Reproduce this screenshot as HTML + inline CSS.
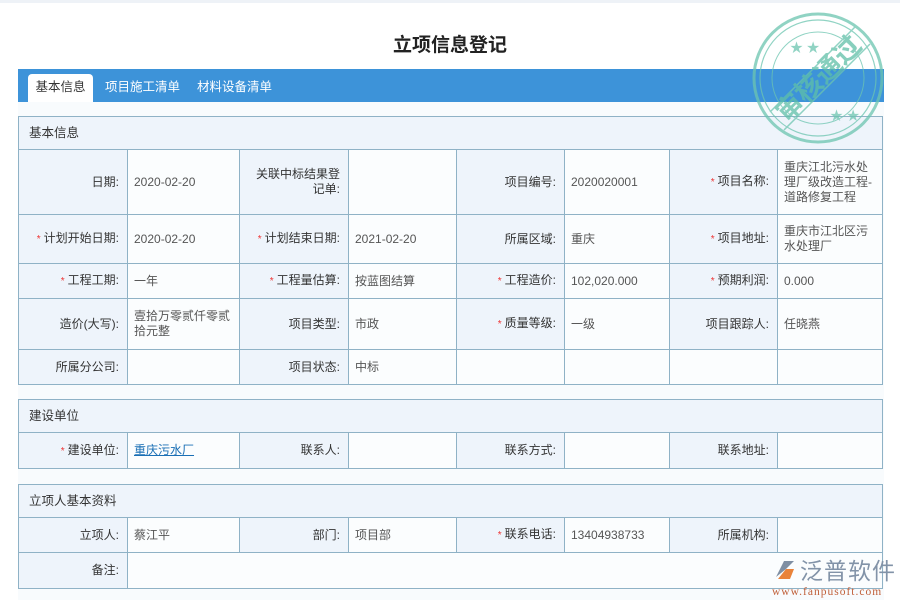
<!DOCTYPE html>
<html><head><meta charset="utf-8">
<style>
*{margin:0;padding:0;box-sizing:border-box}
body{width:900px;height:600px;background:#fff;font-family:"Liberation Sans","Noto Sans CJK SC",sans-serif;font-size:12px;color:#333;position:relative;overflow:hidden}
.topline{position:absolute;left:0;top:0;width:900px;height:3px;background:#eef2f7}
h1{position:absolute;top:30px;left:0;width:900px;text-align:center;font-size:19px;font-weight:bold;color:#222}
.tabs{position:absolute;left:18px;top:69px;width:866px;height:33px;background:#3d93d9}
.tab{position:absolute;top:5px;height:28px;line-height:26px;font-size:12.5px;color:#fff}
.tab.on{background:#fff;color:#333;border-radius:4px 4px 0 0;left:10px;width:65px;text-align:center}
.content{position:absolute;left:18px;top:102px;width:866px;height:498px;background:#f8fbfd}
table{position:absolute;left:18px;border-collapse:collapse;table-layout:fixed;width:864px}
td{border:1px solid #8fb2c6;padding:0 6px;font-size:12px;vertical-align:middle;line-height:15px}
td.h{background:#eef4fb;text-align:left;padding-left:10px;font-size:12.5px}
td.l{background:#eef4fb;text-align:right;padding-right:8px}
td.v{background:#fbfdfe;color:#555}
.s{color:#e33;font-size:10px;margin-right:3px}
a{color:#1a6fb5;text-decoration:underline}
.stamp{position:absolute;left:748px;top:8px;width:140px;height:140px;opacity:.75}
.logo{position:absolute;left:772px;top:555px}
</style></head><body>
<div class="topline"></div>
<h1>立项信息登记</h1>
<div class="content"></div>
<div class="tabs">
<div class="tab on">基本信息</div>
<div class="tab" style="left:87px">项目施工清单</div>
<div class="tab" style="left:179px">材料设备清单</div>
</div>
<table style="top:116px">
<col style="width:109px"><col style="width:112px"><col style="width:109px"><col style="width:108px"><col style="width:108px"><col style="width:105px"><col style="width:108px"><col style="width:105px">
<tr style="height:33px"><td class="h" colspan="8">基本信息</td></tr>
<tr style="height:65px"><td class="l">日期:</td><td class="v">2020-02-20</td><td class="l">关联中标结果登记单:</td><td class="v"></td><td class="l">项目编号:</td><td class="v">2020020001</td><td class="l"><span class="s">*</span>项目名称:</td><td class="v">重庆江北污水处理厂级改造工程-道路修复工程</td></tr>
<tr style="height:49px"><td class="l"><span class="s">*</span>计划开始日期:</td><td class="v">2020-02-20</td><td class="l"><span class="s">*</span>计划结束日期:</td><td class="v">2021-02-20</td><td class="l">所属区域:</td><td class="v">重庆</td><td class="l"><span class="s">*</span>项目地址:</td><td class="v">重庆市江北区污水处理厂</td></tr>
<tr style="height:35px"><td class="l"><span class="s">*</span>工程工期:</td><td class="v">一年</td><td class="l"><span class="s">*</span>工程量估算:</td><td class="v">按蓝图结算</td><td class="l"><span class="s">*</span>工程造价:</td><td class="v">102,020.000</td><td class="l"><span class="s">*</span>预期利润:</td><td class="v">0.000</td></tr>
<tr style="height:51px"><td class="l">造价(大写):</td><td class="v">壹拾万零贰仟零贰拾元整</td><td class="l">项目类型:</td><td class="v">市政</td><td class="l"><span class="s">*</span>质量等级:</td><td class="v">一级</td><td class="l">项目跟踪人:</td><td class="v">任晓燕</td></tr>
<tr style="height:35px"><td class="l">所属分公司:</td><td class="v"></td><td class="l">项目状态:</td><td class="v">中标</td><td class="v"></td><td class="v"></td><td class="v"></td><td class="v"></td></tr>
</table>
<table style="top:399px">
<col style="width:109px"><col style="width:112px"><col style="width:109px"><col style="width:108px"><col style="width:108px"><col style="width:105px"><col style="width:108px"><col style="width:105px">
<tr style="height:33px"><td class="h" colspan="8">建设单位</td></tr>
<tr style="height:36px"><td class="l"><span class="s">*</span>建设单位:</td><td class="v"><a>重庆污水厂</a></td><td class="l">联系人:</td><td class="v"></td><td class="l">联系方式:</td><td class="v"></td><td class="l">联系地址:</td><td class="v"></td></tr>
</table>
<table style="top:484px">
<col style="width:109px"><col style="width:112px"><col style="width:109px"><col style="width:108px"><col style="width:108px"><col style="width:105px"><col style="width:108px"><col style="width:105px">
<tr style="height:33px"><td class="h" colspan="8">立项人基本资料</td></tr>
<tr style="height:35px"><td class="l">立项人:</td><td class="v">蔡江平</td><td class="l">部门:</td><td class="v">项目部</td><td class="l"><span class="s">*</span>联系电话:</td><td class="v">13404938733</td><td class="l">所属机构:</td><td class="v"></td></tr>
<tr style="height:36px"><td class="l">备注:</td><td class="v" colspan="7"></td></tr>
</table>
<svg class="stamp" viewBox="0 0 140 140">
<g fill="none" stroke="#6cc5b0">
<circle cx="70" cy="70" r="64" stroke-width="3"/>
<circle cx="70" cy="70" r="58" stroke-width="1.2"/>
<circle cx="70" cy="70" r="46" stroke-width="1"/>
<line x1="22" y1="104" x2="108" y2="18" stroke-width="1.5"/>
<line x1="36" y1="122" x2="122" y2="36" stroke-width="1.5"/>
</g>
<text x="70" y="80" fill="#5fbfa8" font-size="27" font-weight="bold" text-anchor="middle" transform="rotate(-45 70 70)" font-family="Noto Sans CJK SC,sans-serif">审核通过</text>
<text x="42" y="44" fill="#6cc5b0" font-size="13">★ ★</text>
<text x="82" y="112" fill="#6cc5b0" font-size="13">★ ★</text>
</svg>
<div class="logo">
<svg width="26" height="24" viewBox="0 0 26 24" style="position:absolute;left:0;top:2px"><path d="M4 20 L12 4 L22 4 L14 12 Z" fill="#7f8fa3"/><path d="M6 22 L14 12 L22 12 L18 22 Z" fill="#e9833a"/></svg>
<div style="position:absolute;left:28px;top:-3px;font-size:23px;color:#8293a8;white-space:nowrap;font-family:'Noto Sans CJK SC',sans-serif;letter-spacing:1px">泛普软件</div>
<div style="position:absolute;left:0px;top:31px;font-size:11.5px;color:#c0603a;white-space:nowrap;font-family:'Liberation Serif',serif;letter-spacing:1px">www.fanpusoft.com</div>
</div>
</body></html>
